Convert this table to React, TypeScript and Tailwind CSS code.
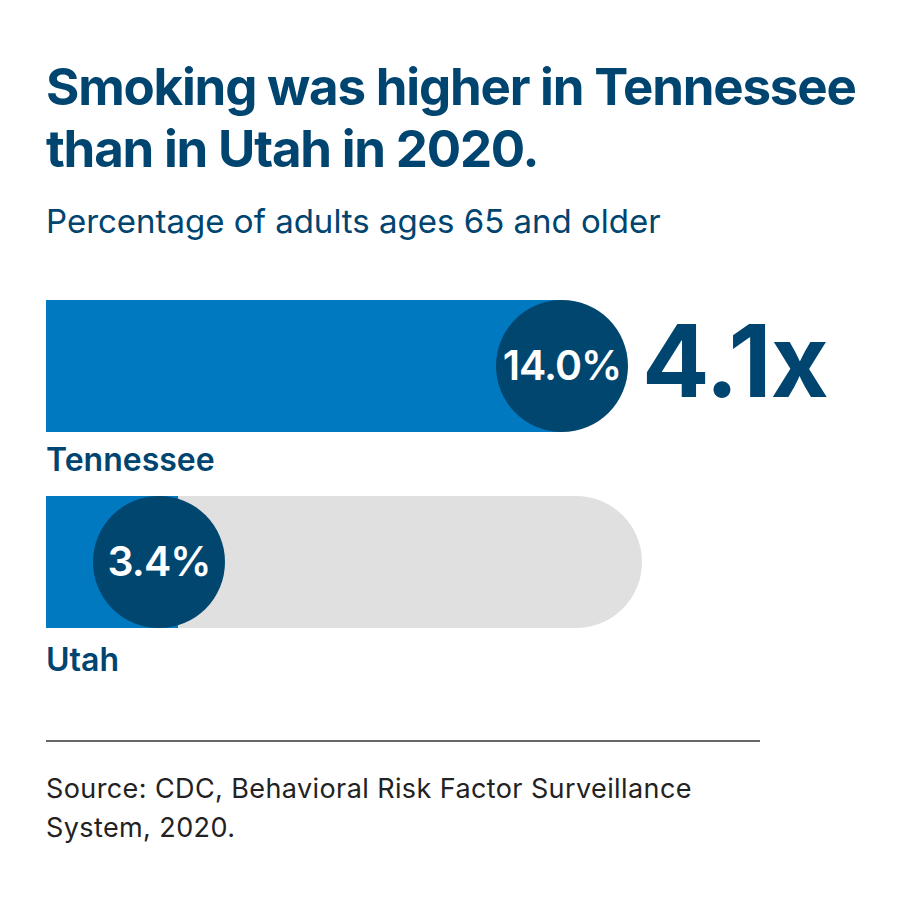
export default function App() {
  return (
    <div className="w-[900px] h-[900px] bg-white font-['Inter',sans-serif] pl-[46px] pt-[56px] flex flex-col">
      {/* Title */}
      <h1 className="text-[51px] leading-[62px] font-bold text-[#004470] tracking-[-1.2px]">
        Smoking was higher in Tennessee
        <br />
        than in Utah in 2020.
      </h1>
      <p className="mt-[21px] text-[33px] leading-[40px] font-normal text-[#004470]">
        Percentage of adults ages 65 and older
      </p>

      {/* Tennessee */}
      <div className="mt-[59px] flex items-center">
        <div className="relative w-[516px] h-[132px] bg-[#0079c1]">
          <div className="absolute left-[450px] top-0 w-[132px] h-[132px] rounded-full bg-[#00466f] flex items-center justify-center">
            <span className="text-[41px] font-semibold text-white tracking-[-1px]">14.0%</span>
          </div>
        </div>
        <span className="ml-[80px] mb-[10px] text-[100px] leading-none font-bold text-[#004470] tracking-[-1px]">4.1x</span>
      </div>
      <div className="mt-[8px] text-[32px] leading-[40px] font-semibold text-[#004470]">Tennessee</div>

      {/* Utah */}
      <div className="mt-[16px] relative w-[596px] h-[132px] bg-[#e0e0e0] rounded-r-full">
        <div className="w-[132px] h-full bg-[#0079c1]" />
        <div className="absolute left-[47px] top-0 w-[132px] h-[132px] rounded-full bg-[#00466f] flex items-center justify-center">
          <span className="text-[41px] font-semibold text-white tracking-[-1px]">3.4%</span>
        </div>
      </div>
      <div className="mt-[12px] text-[32px] leading-[40px] font-semibold text-[#004470]">Utah</div>

      {/* Source */}
      <div className="mt-[60px] w-[714px] h-[2px] bg-[#666666]" />
      <p className="mt-[27px] text-[27px] leading-[39px] text-[#222222] tracking-[0.4px]">
        Source: CDC, Behavioral Risk Factor Surveillance
        <br />
        System, 2020.
      </p>
    </div>
  )
}
